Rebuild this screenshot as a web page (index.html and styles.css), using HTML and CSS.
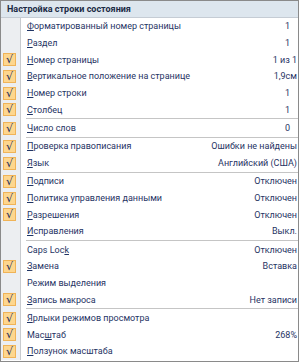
FILE: index.html
```html
<!DOCTYPE html>
<html lang="ru">
<head>
<meta charset="utf-8">
<title>Настройка строки состояния</title>
<link rel="stylesheet" href="styles.css">
</head>
<body>
<div class="menu">
  <div class="title">Настройка строки состояния</div>
  <div class="items">
    <div class="item"><span class="gut"></span><span class="label"><u>Ф</u>орматированный номер страницы</span><span class="val narrow">1</span></div>
    <div class="item"><span class="gut"></span><span class="label"><u>Р</u>аздел</span><span class="val narrow">1</span></div>
    <div class="item"><span class="gut"><span class="chk">√</span></span><span class="label"><u>Н</u>омер страницы</span><span class="val">1 из 1</span></div>
    <div class="item"><span class="gut"><span class="chk">√</span></span><span class="label"><u>В</u>ертикальное положение на странице</span><span class="val">1,9см</span></div>
    <div class="item"><span class="gut"><span class="chk">√</span></span><span class="label"><u>Н</u>омер строки</span><span class="val narrow">1</span></div>
    <div class="item"><span class="gut"><span class="chk">√</span></span><span class="label"><u>С</u>толбец</span><span class="val narrow">1</span></div>
    <div class="sep"></div>
    <div class="item"><span class="gut"><span class="chk">√</span></span><span class="label"><u>Ч</u>исло слов</span><span class="val narrow">0</span></div>
    <div class="sep"></div>
    <div class="item"><span class="gut"><span class="chk">√</span></span><span class="label"><u>П</u>роверка правописания</span><span class="val">Ошибки не найдены</span></div>
    <div class="item"><span class="gut"><span class="chk">√</span></span><span class="label"><u>Я</u>зык</span><span class="val">Английский (США)</span></div>
    <div class="sep"></div>
    <div class="item"><span class="gut"><span class="chk">√</span></span><span class="label"><u>П</u>одписи</span><span class="val">Отключен</span></div>
    <div class="item"><span class="gut"><span class="chk">√</span></span><span class="label"><u>П</u>олитика управления данными</span><span class="val">Отключен</span></div>
    <div class="item"><span class="gut"><span class="chk">√</span></span><span class="label"><u>Р</u>азрешения</span><span class="val">Отключен</span></div>
    <div class="item"><span class="gut"></span><span class="label"><u>И</u>справления</span><span class="val">Выкл.</span></div>
    <div class="sep"></div>
    <div class="item"><span class="gut"></span><span class="label">Caps Loc<u>k</u></span><span class="val">Отключен</span></div>
    <div class="item"><span class="gut"><span class="chk">√</span></span><span class="label"><u>З</u>амена</span><span class="val">Вставка</span></div>
    <div class="item"><span class="gut"></span><span class="label">Режим выделения</span><span class="val"></span></div>
    <div class="item"><span class="gut"><span class="chk">√</span></span><span class="label"><u>З</u>апись макроса</span><span class="val">Нет записи</span></div>
    <div class="sep"></div>
    <div class="item"><span class="gut"><span class="chk">√</span></span><span class="label"><u>Я</u>рлыки режимов просмотра</span><span class="val"></span></div>
    <div class="item"><span class="gut"><span class="chk">√</span></span><span class="label">Мас<u>ш</u>таб</span><span class="val">268%</span></div>
    <div class="item"><span class="gut"><span class="chk">√</span></span><span class="label"><u>П</u>олзунок масштаба</span><span class="val"></span></div>
  </div>
</div>
</body>
</html>
```

FILE: styles.css
```css
html, body {
  margin: 0;
  padding: 0;
  background: #ffffff;
}

.menu {
  width: 297px;
  height: 360px;
  border: 1px solid #8a8a8a;
  background: #ffffff;
  font-family: Roboto, "Noto Sans", sans-serif;
  font-size: 9px;
  color: #1f3464;
  overflow: hidden;
}

.title {
  height: 17px;
  box-sizing: border-box;
  border-bottom: 1px solid #c5ccd4;
  background: #dde6ee;
  padding-left: 6px;
  display: flex;
  align-items: center;
  font-weight: bold;
  color: #1a2a44;
}

.items {
  background: linear-gradient(to right, #eceef1 0 19px, #c8cbcf 19px 20px, #ffffff 20px);
}

.item {
  height: 16.7px;
  display: grid;
  grid-template-columns: 20px 1fr auto;
  align-items: center;
}

.gut {
  height: 100%;
  display: flex;
  align-items: center;
  padding-left: 2px;
}

.chk {
  width: 13px;
  height: 13px;
  box-sizing: border-box;
  border: 1px solid #f0b357;
  background: #fdd68e;
  color: #1c2d5a;
  font-size: 11px;
  line-height: 11px;
  text-align: center;
  font-family: "DejaVu Sans", sans-serif;
}

.label {
  padding-left: 6px;
  white-space: nowrap;
}

.label u {
  text-decoration-thickness: 1px;
  text-underline-offset: 1px;
}

.val {
  padding-right: 1px;
  white-space: nowrap;
}

.val.narrow {
  padding-right: 8px;
}

.sep {
  height: 1px;
  margin: 0.3px 0 0.3px 25px;
  background: #c5c5c5;
}
```
